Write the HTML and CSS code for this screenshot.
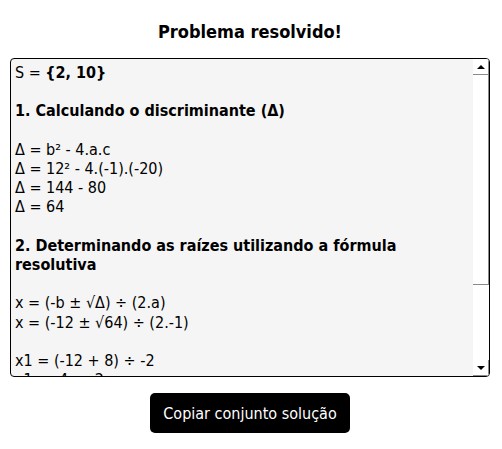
FILE: index.html
```html
<!DOCTYPE html>
<html lang="pt-BR">
<head>
<meta charset="utf-8">
<title>Problema resolvido!</title>
<link rel="stylesheet" href="styles.css">
</head>
<body>
<main class="page">
  <h1 class="title">Problema resolvido!</h1>
  <section class="result">
    <div class="content">
      <p class="para">S = <b>{2, 10}</b></p>
      <p class="para"><b>1. Calculando o discriminante (Δ)</b></p>
      <p class="para">Δ = b² - 4.a.c<br>Δ = 12² - 4.(-1).(-20)<br>Δ = 144 - 80<br>Δ = 64</p>
      <p class="para"><b>2. Determinando as raízes utilizando a fórmula resolutiva</b></p>
      <p class="para">x = (-b ± √Δ) ÷ (2.a)<br>x = (-12 ± √64) ÷ (2.-1)</p>
      <p class="para">x1 = (-12 + 8) ÷ -2<br>x1 = -4 ÷ -2<br>x1 = 2</p>
      <p class="para">x2 = (-12 - 8) ÷ -2<br>x2 = -20 ÷ -2<br>x2 = 10</p>
    </div>
    <div class="scrollbar" aria-hidden="true">
      <div class="sb-btn"><span class="arrow-up"></span></div>
      <div class="sb-thumb"></div>
      <div class="sb-track"></div>
      <div class="sb-btn"><span class="arrow-down"></span></div>
    </div>
  </section>
  <div class="actions">
    <button class="copy-btn" type="button">Copiar conjunto solução</button>
  </div>
</main>
</body>
</html>
```

FILE: styles.css
```css
html, body {
  margin: 0;
  padding: 0;
  background: #ffffff;
}

body {
  font-family: "DejaVu Sans Condensed", "DejaVu Sans", sans-serif;
  font-stretch: condensed;
  color: #000000;
}

.page {
  width: 480px;
  margin: 0 10px;
  padding-top: 20px;
  display: flex;
  flex-direction: column;
  align-items: stretch;
}

.title {
  margin: 0 0 15px 0;
  font-size: 18px;
  line-height: 23px;
  font-weight: bold;
  text-align: center;
}

.result {
  height: 319px;
  box-sizing: border-box;
  border: 1px solid #000000;
  border-radius: 4px;
  background: #f5f5f5;
  display: flex;
  overflow: hidden;
}

.content {
  flex: 1;
  padding: 4px;
  overflow: hidden;
  font-size: 16px;
  line-height: 19.2px;
}

.para {
  margin: 0 0 19.2px 0;
}

.scrollbar {
  width: 16px;
  flex: none;
  background: #ffffff;
  display: flex;
  flex-direction: column;
}

.sb-btn {
  height: 16px;
  flex: none;
  display: flex;
  align-items: center;
  justify-content: center;
  box-shadow: inset -1px -1px 0 #8a8a8a;
}

.sb-thumb {
  height: 210px;
  flex: none;
  box-shadow: inset -1px -1px 0 #8a8a8a;
}

.sb-track {
  flex: 1;
}

.arrow-up,
.arrow-down {
  width: 0;
  height: 0;
  border-left: 4px solid transparent;
  border-right: 4px solid transparent;
  margin-right: 1px;
}

.arrow-up {
  border-bottom: 4px solid #000000;
}

.arrow-down {
  border-top: 4px solid #000000;
}

.actions {
  display: flex;
  justify-content: center;
  padding-top: 16px;
}

.copy-btn {
  width: 200px;
  height: 40px;
  border: none;
  border-radius: 5px;
  background: #000000;
  color: #ffffff;
  font-family: inherit;
  font-stretch: condensed;
  font-size: 16px;
  padding: 0;
  cursor: pointer;
}
```
